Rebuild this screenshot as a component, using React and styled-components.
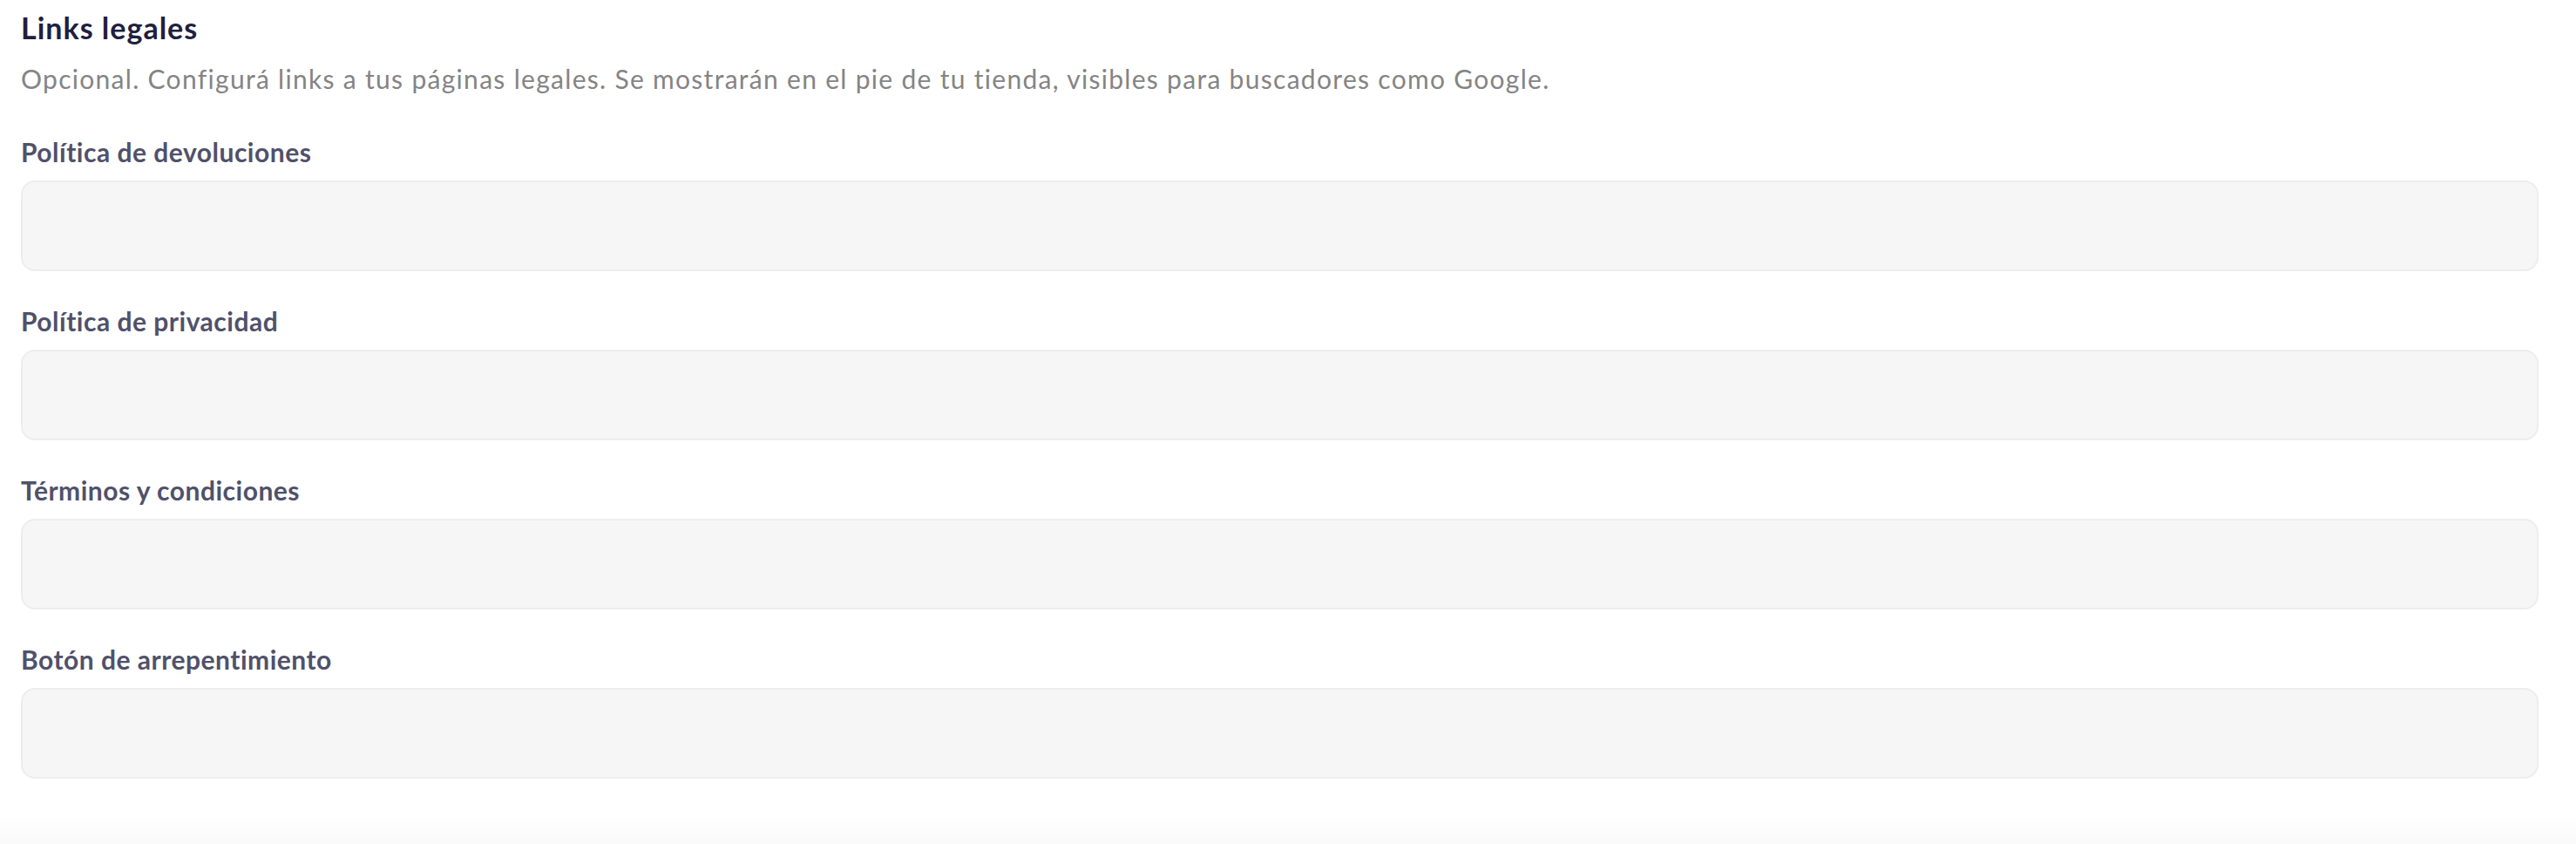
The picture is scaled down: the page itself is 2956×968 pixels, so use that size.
import React from 'react';
import styled, { createGlobalStyle } from 'styled-components';

const GlobalStyle = createGlobalStyle`
  html, body {
    margin: 0;
    padding: 0;
    background: #ffffff;
  }
  body {
    font-family: Lato, "Open Sans", "Liberation Sans", sans-serif;
    -webkit-font-smoothing: antialiased;
  }
`

// ----styled components----
const Page = styled.div`
  min-height: 968px;
  display: flex;
  flex-direction: column;
  background: #ffffff;
`
const Section = styled.section` // block holding the legal links form
  display: flex;
  flex-direction: column;
  padding: 12px 43px 0 24px;
`
const Title = styled.h2`
  margin: 0;
  font-size: 34px;
  line-height: 40px;
  font-weight: 700;
  letter-spacing: 1px;
  color: #1e2040;
`
const Description = styled.p`
  margin: 18px 0 0 0;
  font-size: 30px;
  line-height: 40px;
  font-weight: 400;
  letter-spacing: 1.3px;
  color: #848484;
`
const FieldList = styled.div`
  display: flex;
  flex-direction: column;
  gap: 37px;
  margin-top: 44px;
`
const Field = styled.label`
  display: flex;
  flex-direction: column;
  gap: 13px;
`
const FieldLabel = styled.span`
  font-size: 30px;
  line-height: 40px;
  font-weight: 700;
  letter-spacing: 0.5px;
  color: #50516a;
`
const FieldInput = styled.input`
  box-sizing: border-box;
  width: 100%;
  height: 104px;
  margin: 0;
  padding: 0 24px;
  border: 2px solid #ededed;
  border-radius: 16px;
  background: #f6f6f6;
  font-family: inherit;
  font-size: 28px;
  color: #333;
  outline: none;
`
const BottomFade = styled.div` // faint grey band at the foot of the panel
  margin-top: auto;
  height: 36px;
  background: linear-gradient(#ffffff, #fafafa);
`

const fields = [
  'Política de devoluciones',
  'Política de privacidad',
  'Términos y condiciones',
  'Botón de arrepentimiento',
];

const App = () => {
  return (
    <Page>
      <GlobalStyle />
      <Section>
        <Title>Links legales</Title>
        <Description>
          Opcional. Configurá links a tus páginas legales. Se mostrarán en el pie de tu tienda, visibles para buscadores como Google.
        </Description>
        <FieldList>
          {fields.map((name) => (
            <Field key={name}>
              <FieldLabel>{name}</FieldLabel>
              <FieldInput type="text" />
            </Field>
          ))}
        </FieldList>
      </Section>
      <BottomFade />
    </Page>
  );
};

export default App;
